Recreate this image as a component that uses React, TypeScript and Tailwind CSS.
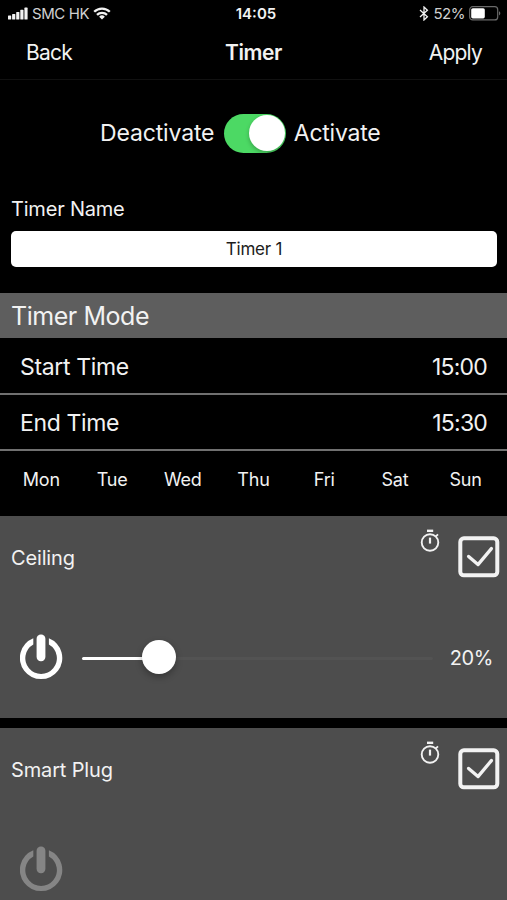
import { useState } from "react";

type Device = {
  id: string;
  name: string;
  on: boolean;
  checked: boolean;
  level?: number;
};

const DAYS = ["Mon", "Tue", "Wed", "Thu", "Fri", "Sat", "Sun"];

const DEVICES: Device[] = [
  { id: "ceiling", name: "Ceiling", on: true, checked: true, level: 20 },
  { id: "plug", name: "Smart Plug", on: false, checked: true },
];

function SignalIcon() {
  return (
    <svg width="20" height="13" viewBox="0 0 20 13" fill="currentColor">
      <rect x="0" y="8.4" width="3.2" height="4.2" rx="0.6" />
      <rect x="4.1" y="7" width="3.2" height="5.6" rx="0.6" />
      <rect x="8.2" y="5" width="3.2" height="7.6" rx="0.6" />
      <rect x="12.3" y="2.8" width="3.2" height="9.8" rx="0.6" />
      <rect x="16.4" y="0.6" width="3.2" height="12" rx="0.6" />
    </svg>
  );
}

function WifiIcon() {
  return (
    <svg width="18" height="13" viewBox="0 0 18 13" fill="none" stroke="currentColor" strokeWidth="2.3">
      <path d="M1.2 4.8a11 11 0 0 1 15.6 0" />
      <path d="M4 7.9a7 7 0 0 1 10 0" />
      <path d="M9 12.6 6.1 9.8a4.1 4.1 0 0 1 5.8 0Z" fill="currentColor" stroke="none" />
    </svg>
  );
}

function BluetoothIcon() {
  return (
    <svg width="10" height="15" viewBox="0 0 10 15" fill="none" stroke="currentColor" strokeWidth="1.3">
      <path d="M1 4l7.4 6.8L5 14V1l3.4 3.2L1 11" />
    </svg>
  );
}

function BatteryIcon() {
  return (
    <svg width="32" height="15" viewBox="0 0 32 15" fill="none">
      <rect x="0.7" y="0.7" width="28" height="13.2" rx="3" stroke="#6a6a6a" strokeWidth="1.2" />
      <rect x="2.2" y="2.2" width="13.6" height="10.2" rx="1.6" fill="#fff" />
      <path d="M30 5.2c1.8.6 1.8 3.6 0 4.2Z" fill="#6a6a6a" />
    </svg>
  );
}

function StopwatchIcon() {
  return (
    <svg width="20" height="24" viewBox="0 0 20 24" fill="none" stroke="currentColor" strokeWidth="1.9">
      <circle cx="10" cy="13.5" r="8.3" />
      <path d="M7 1.8h6.2" strokeWidth="2.4" />
      <path d="M10 8.6v6" strokeWidth="2.2" />
      <path d="M15.6 7.6l2.4-2.2" />
    </svg>
  );
}

function PowerIcon() {
  return (
    <svg width="44" height="46" viewBox="0 0 44 46" fill="currentColor">
      <path d="M13.3 4.2a21.2 21.2 0 1 0 15.6 0v6.3a15.8 15.8 0 1 1-15.6 0Z" />
      <rect x="16.6" y="0.6" width="8.8" height="26.6" rx="4.2" />
    </svg>
  );
}

function CheckBox({ checked, onClick }: { checked: boolean; onClick: () => void }) {
  return (
    <button onClick={onClick} aria-label="Include device">
      <svg width="42" height="42" viewBox="0 0 42 42" fill="none" stroke="currentColor">
        <rect x="2.3" y="2.3" width="37" height="37" rx="3.6" strokeWidth="4" />
        {checked && (
          <path d="M10.6 20.4l9.4 8.2 13.4-16" strokeWidth="3.3" strokeLinecap="round" strokeLinejoin="round" />
        )}
      </svg>
    </button>
  );
}

function LevelSlider({ level }: { level: number }) {
  return (
    <div className="relative flex h-9 w-[351px] items-center">
      <div className="mt-[3px] h-[3px] w-full rounded-full bg-[#535353]">
        <div className="h-full rounded-full bg-white" style={{ width: `${level}%` }} />
      </div>
      <div
        className="absolute top-px size-[34px] -translate-x-1/2 rounded-full bg-white shadow-[0_3px_7px_rgba(0,0,0,0.3)]"
        style={{ left: `${level + 2}%` }}
      />
    </div>
  );
}

function DeviceCard({ device, onToggle }: { device: Device; onToggle: () => void }) {
  return (
    <section className="h-[202px] shrink-0 bg-[#4d4d4d]">
      <div className="flex h-[82px] items-center pr-[7px] pl-[11px]">
        <h3 className="flex-1 pt-px text-xl tracking-[-0.15px]">{device.name}</h3>
        <div className="mr-[18px] mb-8">
          <StopwatchIcon />
        </div>
        <div className="flex">
          <CheckBox checked={device.checked} onClick={onToggle} />
        </div>
      </div>
      <div className="flex h-[118px] items-center pr-3.5 pl-5">
        <div className={device.on ? "text-white" : "text-[#858585]"}>
          <PowerIcon />
        </div>
        {device.level !== undefined && (
          <>
            <div className="ml-[18px]">
              <LevelSlider level={device.level} />
            </div>
            <span className="ml-auto pt-0.5 text-xl tracking-[-0.4px]">{device.level}%</span>
          </>
        )}
      </div>
    </section>
  );
}

function TimeRow({ label, value }: { label: string; value: string }) {
  return (
    <div className="flex h-14 shrink-0 items-center justify-between border-b-2 border-[#707070] px-5 pt-0.5 text-[23px]">
      <span className="tracking-[-0.35px]">{label}</span>
      <span className="tracking-[-0.8px]">{value}</span>
    </div>
  );
}

export default function App() {
  const [active, setActive] = useState(true);
  const [name, setName] = useState("Timer 1");
  const [devices, setDevices] = useState(DEVICES);

  const toggleDevice = (id: string) =>
    setDevices((list) => list.map((d) => (d.id === id ? { ...d, checked: !d.checked } : d)));

  return (
    <div className="flex h-[900px] w-[507px] flex-col overflow-hidden bg-black font-['Inter',sans-serif] text-[#f2f2f2]">
      <div className="grid h-[27px] shrink-0 grid-cols-3 items-center pr-1.5 pl-2 text-[15px]">
        <div className="flex items-center gap-1">
          <SignalIcon />
          <span className="pt-0.5 tracking-[-0.4px] text-[#d0d0d0]">SMC HK</span>
          <WifiIcon />
        </div>
        <span className="pt-0.5 pl-[3px] text-center font-semibold">14:05</span>
        <div className="flex items-center justify-end gap-1">
          <BluetoothIcon />
          <span className="pt-0.5 tracking-[-0.5px] text-[#d0d0d0]">52%</span>
          <BatteryIcon />
        </div>
      </div>

      <header className="grid h-[53px] shrink-0 grid-cols-3 items-center border-b border-[#111] px-[25px] text-[21px]">
        <button className="pl-px text-left tracking-[-0.8px]">Back</button>
        <h1 className="text-center font-semibold tracking-[-0.4px]">Timer</h1>
        <button className="text-right tracking-[-0.8px]">Apply</button>
      </header>

      <div className="flex h-[106px] shrink-0 items-center pl-[100px] text-[23px]">
        <span className="tracking-[-0.15px]">Deactivate</span>
        <button
          onClick={() => setActive((a) => !a)}
          aria-label="Timer active"
          className={`mr-2 ml-[9.5px] flex h-[39px] w-[62px] items-center rounded-full px-px ${
            active ? "justify-end bg-[#4cd964]" : "justify-start bg-[#3a3a3a]"
          }`}
        >
          <span className="size-9 rounded-full bg-white shadow-[0_2px_4px_rgba(0,0,0,0.25)]" />
        </button>
        <span className="tracking-[-0.25px]">Activate</span>
      </div>

      <div className="flex h-[107px] shrink-0 flex-col px-2.5 pt-2 pl-[11px]">
        <label className="text-xl leading-[30px] tracking-[-0.2px]">Timer Name</label>
        <input
          value={name}
          onChange={(e) => setName(e.target.value)}
          className="mt-[7px] h-9 rounded-[5px] bg-white text-center text-[17px] tracking-[-0.2px] text-[#1c1c1c] outline-none"
        />
      </div>

      <h2 className="flex h-[45px] shrink-0 items-center bg-[#5e5e5e] pt-[3px] pl-[11px] text-[25px] tracking-[-0.45px]">
        Timer Mode
      </h2>
      <div className="flex shrink-0 flex-col pt-px">
        <TimeRow label="Start Time" value="15:00" />
        <TimeRow label="End Time" value="15:30" />
      </div>

      <div className="grid h-[65px] shrink-0 grid-cols-7 items-center px-[6px] pb-[7px] text-center text-lg">
        {DAYS.map((day) => (
          <button key={day} className="tracking-[-0.2px]">
            {day}
          </button>
        ))}
      </div>

      <div className="flex flex-col gap-2.5">
        {devices.map((device) => (
          <DeviceCard key={device.id} device={device} onToggle={() => toggleDevice(device.id)} />
        ))}
      </div>
    </div>
  );
}
